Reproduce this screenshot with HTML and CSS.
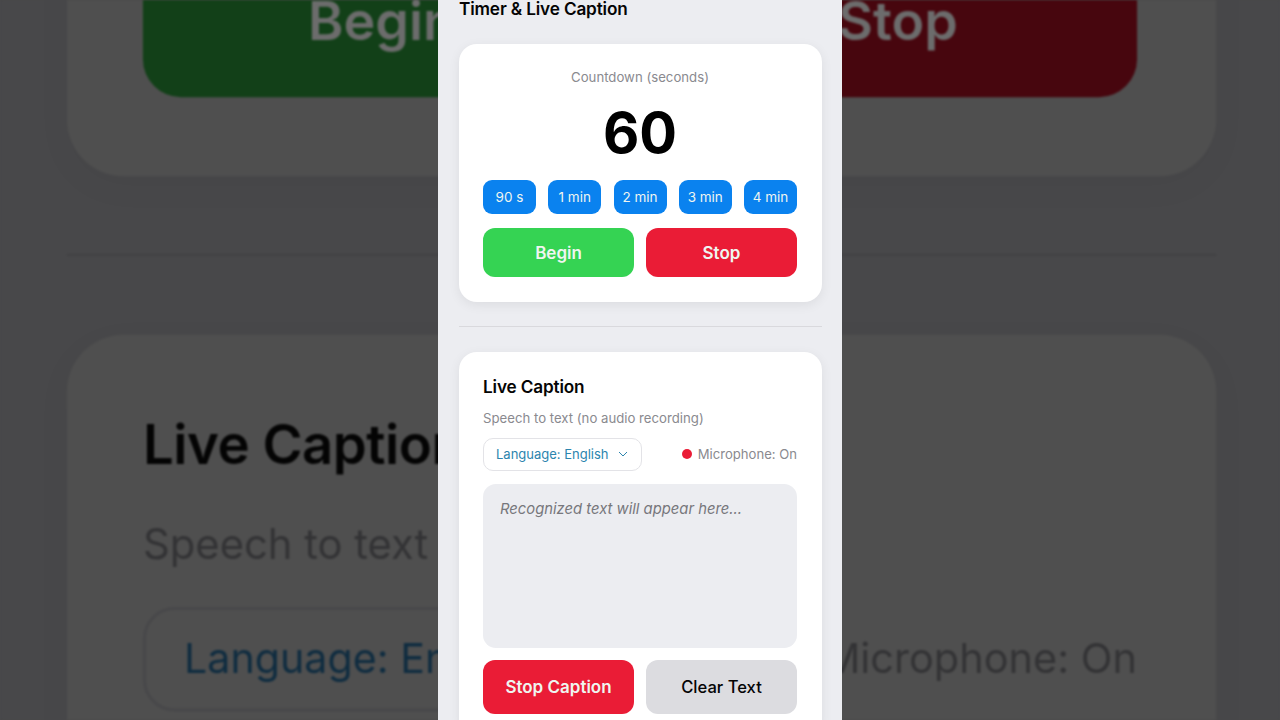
FILE: index.html
```html
<!DOCTYPE html>
<html>
<head>
    <title>Timer &amp; Live Caption</title>
    <link rel="stylesheet" href="styles.css">
</head>
<body>
    <!-- blurred, zoomed copy of the screen behind the video -->
    <div class="backdrop" aria-hidden="true">
        <div class="screen">
            <h2 class="page-title">Timer &amp; Live Caption</h2>
            <div class="card timer-card">
                <div class="timer-label">Countdown (seconds)</div>
                <div class="timer-value">60</div>
                <div class="presets">
                    <button class="preset">90 s</button>
                    <button class="preset">1 min</button>
                    <button class="preset">2 min</button>
                    <button class="preset">3 min</button>
                    <button class="preset">4 min</button>
                </div>
                <div class="actions">
                    <button class="btn btn-green">Begin</button>
                    <button class="btn btn-red">Stop</button>
                </div>
            </div>
            <hr class="divider">
            <div class="card caption-card">
                <h3 class="caption-title">Live Caption</h3>
                <p class="caption-sub">Speech to text (no audio recording)</p>
                <div class="caption-controls">
                    <div class="lang-select">
                        <span>Language: English</span>
                        <svg class="chevron" viewBox="0 0 10 6"><path d="M1 1l4 4 4-4"/></svg>
                    </div>
                    <div class="mic-status"><span class="mic-dot"></span>Microphone: On</div>
                </div>
                <div class="caption-box">Recognized text will appear here...</div>
                <div class="actions">
                    <button class="btn btn-tall btn-red">Stop Caption</button>
                    <button class="btn btn-tall btn-grey">Clear Text</button>
                </div>
            </div>
        </div>
    </div>

    <div class="screen screen-main">
        <h2 class="page-title">Timer &amp; Live Caption</h2>
        <div class="card timer-card">
            <div class="timer-label">Countdown (seconds)</div>
            <div class="timer-value">60</div>
            <div class="presets">
                <button class="preset">90 s</button>
                <button class="preset">1 min</button>
                <button class="preset">2 min</button>
                <button class="preset">3 min</button>
                <button class="preset">4 min</button>
            </div>
            <div class="actions">
                <button class="btn btn-green">Begin</button>
                <button class="btn btn-red">Stop</button>
            </div>
        </div>
        <hr class="divider">
        <div class="card caption-card">
            <h3 class="caption-title">Live Caption</h3>
            <p class="caption-sub">Speech to text (no audio recording)</p>
            <div class="caption-controls">
                <div class="lang-select">
                    <span>Language: English</span>
                    <svg class="chevron" viewBox="0 0 10 6"><path d="M1 1l4 4 4-4"/></svg>
                </div>
                <div class="mic-status"><span class="mic-dot"></span>Microphone: On</div>
            </div>
            <div class="caption-box">Recognized text will appear here...</div>
            <div class="actions">
                <button class="btn btn-tall btn-red">Stop Caption</button>
                <button class="btn btn-tall btn-grey">Clear Text</button>
            </div>
        </div>
    </div>
</body>
</html>
```

FILE: styles.css
```css
:root {
    --page: #ecedf1;
    --card: #ffffff;
    --ink: #050505;
    --muted: #8a8a8f;
    --blue: #0a82ef;
    --green: #35d353;
    --red: #ea1c36;
    --grey: #dcdce0;
    --on-colour: #eff5f0;
    --link: #2c85ae;
    --line: #d9d9dd;
    --edge: #e3e3e7;
    --hint: #77777c;
    --shadow: rgba(0,0,0,0.07);
}
* { box-sizing: border-box; }
body {
    margin: 0;
    height: 720px;
    overflow: hidden;
    position: relative;
    display: flex;
    justify-content: center;
    font-family: Inter, "Liberation Sans", sans-serif;
    background: #48484a;
}
.backdrop {
    --page: #48484a;
    --card: #4f4f4f;
    --ink: #040404;
    --muted: #333335;
    --blue: #03294a;
    --green: #124018;
    --red: #47060e;
    --grey: #444446;
    --on-colour: #6c6c6c;
    --link: #0f2c40;
    --line: #3e3e40;
    --edge: #48484a;
    --hint: #252527;
    --shadow: rgba(0,0,0,0.03);
    position: absolute;
    inset: 0;
    overflow: hidden;
    display: flex;
    justify-content: center;
    filter: blur(0.8px);
}
.backdrop .screen {
    flex: none;
    transform: scale(3.166);
}
.backdrop .divider {
    transform: translateY(0.3px) scaleY(0.4);
}
.screen {
    width: 404px;
    height: 720px;
    padding: 0 20px 0 21px;
    overflow: hidden;
    background: var(--page);
}
.screen-main { position: relative; }
.page-title {
    margin: 0 0 26px;
    font-size: 17.2px;
    line-height: 18px;
    font-weight: 600;
    letter-spacing: -0.15px;
    color: var(--ink);
}
.card {
    background: var(--card);
    border-radius: 18px;
    padding: 24px 25px 25px 24px;
    box-shadow: 0 3px 12px var(--shadow);
}
.timer-label {
    font-size: 13.2px;
    line-height: 18px;
    text-align: center;
    color: var(--muted);
}
.timer-value {
    margin-top: 12px;
    font-size: 56px;
    line-height: 70px;
    font-weight: 700;
    text-align: center;
    color: #000;
}
.presets {
    display: flex;
    justify-content: space-between;
    margin: 12px 0 14px;
}
.preset {
    width: 53px;
    height: 34px;
    padding: 0;
    border: 0;
    border-radius: 9px;
    background: var(--blue);
    color: var(--on-colour);
    font: 400 13.5px Inter, sans-serif;
}
.actions {
    display: flex;
    gap: 12px;
}
.btn {
    flex: 1;
    height: 49px;
    padding: 0;
    border: 0;
    border-radius: 12px;
    color: var(--on-colour);
    font: 600 17px Inter, sans-serif;
}
.btn-tall { height: 54px; }
.btn-green { background: var(--green); }
.btn-red { background: var(--red); }
.btn-grey { background: var(--grey); color: var(--ink); font-size: 16.6px; font-weight: 500; }
.divider {
    margin: 24px 0 25px;
    border: 0;
    height: 1px;
    background: var(--line);
}
.caption-title {
    margin: 0;
    font-size: 17.2px;
    line-height: 22px;
    font-weight: 600;
    letter-spacing: -0.15px;
    color: var(--ink);
}
.caption-sub {
    margin: 11px 0;
    font-size: 13.2px;
    line-height: 18px;
    color: var(--muted);
}
.caption-controls {
    display: flex;
    justify-content: space-between;
    align-items: center;
    margin-bottom: 13px;
}
.lang-select {
    width: 159px;
    height: 33px;
    padding: 0 13px 1px 12px;
    display: flex;
    justify-content: space-between;
    align-items: center;
    border: 1px solid var(--edge);
    border-radius: 10px;
    font-size: 13px;
    color: var(--link);
}
.chevron {
    width: 10px;
    height: 6px;
    fill: none;
    stroke: var(--link);
    stroke-width: 1;
}
.mic-status {
    display: flex;
    align-items: center;
    gap: 6px;
    padding-bottom: 1px;
    font-size: 13.1px;
    color: var(--muted);
}
.mic-dot {
    width: 10px;
    height: 10px;
    border-radius: 50%;
    background: var(--red);
}
.caption-box {
    height: 164px;
    margin-bottom: 12px;
    padding: 15px 17px;
    border-radius: 13px;
    background: var(--page);
    font-size: 14.8px;
    line-height: 20px;
    font-style: italic;
    color: var(--hint);
}
```
